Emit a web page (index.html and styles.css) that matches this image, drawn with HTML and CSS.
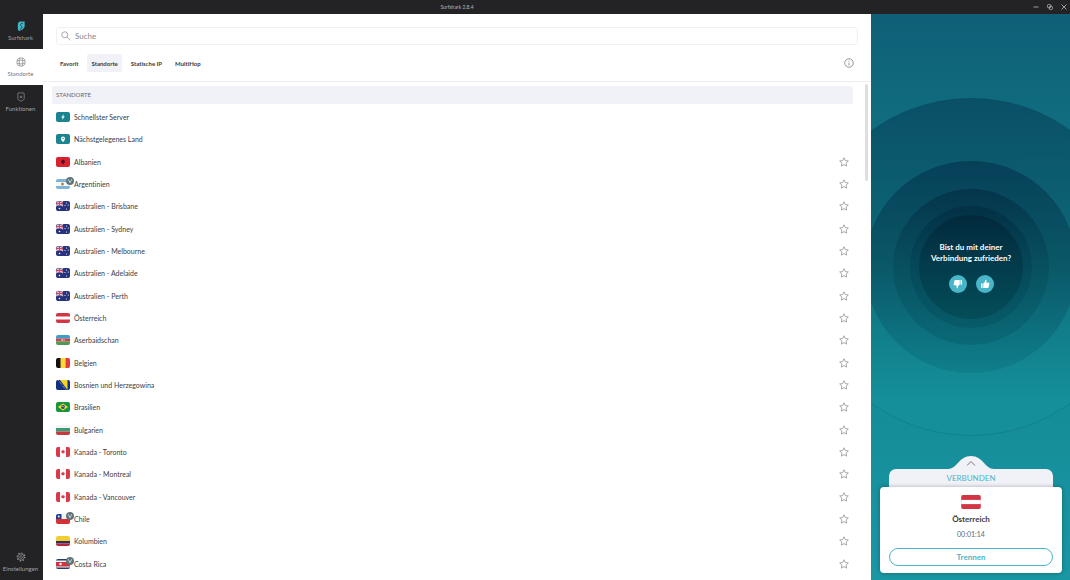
FILE: index.html
```html
<!DOCTYPE html>
<html lang="de">
<head>
<meta charset="utf-8">
<title>Surfshark 2.8.4</title>
<link rel="stylesheet" href="styles.css">
</head>
<body>
<!-- shared icons and flags -->
<svg class="defs" aria-hidden="true">
    <symbol id="star" viewBox="0 0 20 20"><path d="M10 1.5l2.6 5.6 6 .8-4.4 4.2 1.1 6.1L10 15.2l-5.3 3 1.1-6.1L1.4 7.9l6-.8z" fill="none" stroke="#8e8e93" stroke-width="1.5" stroke-linejoin="round"/></symbol>
    <symbol id="fast" viewBox="0 0 28 20"><rect width="28" height="20" fill="#1c8390"/><path d="M15.5 4l-5 7h3l-1 5 5-7h-3z" fill="#fff"/></symbol>
    <symbol id="near" viewBox="0 0 28 20"><rect width="28" height="20" fill="#1c8390"/><path d="M14 16.5c-3-3.5-4-5-4-7.5a4 4 0 0 1 8 0c0 2.5-1 4-4 7.5z" fill="#fff"/><circle cx="14" cy="9" r="1.3" fill="#1c8390"/></symbol>
    <symbol id="al" viewBox="0 0 28 20"><rect width="28" height="20" fill="#d8232f"/><path d="M14 6l1-1 1 2 2 0-1 2 1 2-2 1-1 2-1 1-1-1-1-2-2-1 1-2-1-2h2l1-2z" fill="#4c1018"/></symbol>
    <symbol id="ar" viewBox="0 0 28 20"><rect width="28" height="20" fill="#7fb4d6"/><rect y="6" width="28" height="8" fill="#f7f7f4"/><circle cx="13" cy="10" r="3" fill="#b58a4a"/></symbol>
    <symbol id="au" viewBox="0 0 28 20"><rect width="28" height="20" fill="#27337f"/><path d="M0 0l14 10M14 0L0 10" stroke="#e9b9c8" stroke-width="2.5"/><path d="M7 0v10M0 5h14" stroke="#f3d5de" stroke-width="3.5"/><path d="M7 0v10M0 5h14" stroke="#d2435c" stroke-width="2"/><g fill="#fff"><circle cx="7" cy="15" r="1.6"/><circle cx="21" cy="4" r="1.2"/><circle cx="18" cy="9" r="1.2"/><circle cx="24.5" cy="8" r="1.2"/><circle cx="21" cy="16" r="1.2"/></g></symbol>
    <symbol id="at" viewBox="0 0 28 20"><rect width="28" height="20" fill="#d43545"/><rect y="7" width="28" height="6" fill="#fff"/></symbol>
    <symbol id="az" viewBox="0 0 28 20"><rect width="28" height="7" fill="#3c9fc9"/><rect y="7" width="28" height="6" fill="#c8434a"/><rect y="13" width="28" height="7" fill="#4f9a52"/><circle cx="13" cy="10" r="2.2" fill="#fff"/><circle cx="14" cy="10" r="1.6" fill="#c8434a"/><circle cx="16.5" cy="10" r="1" fill="#fff"/></symbol>
    <symbol id="be" viewBox="0 0 28 20"><rect width="10" height="20" fill="#111"/><rect x="9" width="10" height="20" fill="#fbd53a"/><rect x="19" width="9" height="20" fill="#e23a3f"/></symbol>
    <symbol id="ba" viewBox="0 0 28 20"><rect width="28" height="20" fill="#13307f"/><path d="M8 0h15v20z" fill="#f5d427"/><path d="M5 1l15 19" stroke="#fff" stroke-width="1.5" stroke-dasharray="1.5 2"/></symbol>
    <symbol id="br" viewBox="0 0 28 20"><rect width="28" height="20" fill="#16963c"/><path d="M14 3l10 7-10 7-10-7z" fill="#f6dc2c"/><circle cx="14" cy="10" r="4" fill="#243f78"/><path d="M10.5 9q4-1 7 2" fill="none" stroke="#fff"/></symbol>
    <symbol id="bg" viewBox="0 0 28 20"><rect width="28" height="7" fill="#f4f4f4"/><rect y="6" width="28" height="7" fill="#3d9a76"/><rect y="13" width="28" height="7" fill="#c23a3c"/></symbol>
    <symbol id="ca" viewBox="0 0 28 20"><rect width="28" height="20" fill="#fff"/><rect width="8" height="20" fill="#d83a4a"/><rect x="20" width="8" height="20" fill="#d83a4a"/><path d="M14 5l1.5 2.5 1.5-.5-.5 2h2L16 12h-1.500v2h-1v-2H12L9.500 9h2l-.5-2 1.500.5z" fill="#d83a4a"/></symbol>
    <symbol id="cl" viewBox="0 0 28 20"><rect width="28" height="10" fill="#f4f4f4"/><rect y="10" width="28" height="10" fill="#d52f38"/><rect width="11" height="10" fill="#24408f"/><circle cx="5.5" cy="5" r="1.8" fill="#fff"/></symbol>
    <symbol id="co" viewBox="0 0 28 20"><rect width="28" height="10" fill="#f2cf30"/><rect y="10" width="28" height="5" fill="#2b2f66"/><rect y="15" width="28" height="5" fill="#b9283a"/></symbol>
    <symbol id="cr" viewBox="0 0 28 20"><rect width="28" height="20" fill="#2c3970"/><rect y="3" width="28" height="14" fill="#f4f4f4"/><rect y="6" width="28" height="9" fill="#d0343f"/><circle cx="9" cy="10" r="2.5" fill="#fff"/></symbol>
    <symbol id="virtual" viewBox="0 0 16 16"><circle cx="8" cy="8" r="8" fill="#5f7479"/><path d="M4.5 4.5L8 11.5l3.5-7" fill="none" stroke="#e8eeee" stroke-width="1.6"/></symbol>
    <symbol id="thumb" viewBox="0 0 20 20"><path d="M2 9h3v9H2zM6.5 9L10 5.5v-3C10 1 13 1 13 4v3.500h4.500c1 0 1.500.8 1.300 1.700l-1.600 7.300c-.2.9-.8 1.500-1.700 1.500h-9z" fill="#fff"/></symbol>
</svg>

<div class="app">
    <header class="titlebar">
        <span class="app-title">Surfshark 2.8.4</span>
        <div class="window-buttons">
            <button aria-label="Minimieren"><svg viewBox="0 0 12 12"><path d="M1 6h10"/></svg></button>
            <button aria-label="Wiederherstellen"><svg viewBox="0 0 12 12"><rect x="1" y="1" width="6.5" height="6.5" rx="2"/><rect x="4.5" y="4.5" width="6.5" height="6.5" rx="2"/></svg></button>
            <button aria-label="Schließen"><svg viewBox="0 0 12 12"><path d="M1 1l10 10M11 1L1 11"/></svg></button>
        </div>
    </header>

    <nav class="sidebar">
        <a href="#" class="nav-item">
            <svg viewBox="0 0 22 22"><path d="M10 1h9v10c0 4-3 7-6 8l-6 3c-2-1-3-3-3-5V8c0-4 2-7 6-7z" fill="#3fb9c8"/><path d="M15 5c-3 0-5 1-5 3.5 0 2.5 3.5 2.5 3.5 5.5 0 2-2 3-5 4" fill="none" stroke="#232326" stroke-width="1.6"/></svg>
            <span>Surfshark</span>
        </a>
        <a href="#" class="nav-item active">
            <svg viewBox="0 0 22 22" fill="none" stroke="#77777c" stroke-width="1.4"><circle cx="11" cy="11" r="9"/><rect x="7" y="7" width="8" height="8" rx="3"/><path d="M8 2.500v5M14 2.500v5M8 14.500v5M14 14.500v5M2.500 8h5M14.500 8h5M2.500 14h5M14.500 14h5"/></svg>
            <span>Standorte</span>
        </a>
        <a href="#" class="nav-item">
            <svg viewBox="0 0 22 22" fill="none" stroke="#a0a0a5" stroke-width="1.4"><path d="M6 2h10q2 0 2 2v10c0 3-3 5-7 6-4-1-7-3-7-6V4q0-2 2-2z"/><path d="M11 8v6M8 11h6"/></svg>
            <span>Funktionen</span>
        </a>
        <a href="#" class="nav-item settings">
            <svg viewBox="0 0 22 22" fill="none" stroke="#a0a0a5" stroke-width="1.4"><circle cx="11" cy="11" r="7"/><circle cx="11" cy="11" r="3"/><circle cx="11" cy="11" r="8.5" stroke-width="2.5" stroke-dasharray="2.5 4.175"/></svg>
            <span>Einstellungen</span>
        </a>
    </nav>

    <main class="content">
        <div class="top">
            <label class="search">
                <svg viewBox="0 0 20 20"><circle cx="7.5" cy="7.5" r="6"/><path d="M12 12l7 6.5"/></svg>
                <input type="text" placeholder="Suche" aria-label="Suche">
            </label>
            <div class="tabs">
                <button>Favorit</button>
                <button class="active">Standorte</button>
                <button>Statische IP</button>
                <button>MultiHop</button>
                <button class="info" aria-label="Info"><svg viewBox="0 0 20 20"><circle cx="10" cy="10" r="8.5"/><path d="M10 9v6M10 5v2"/></svg></button>
            </div>
        </div>

        <div class="locations">
            <h2>STANDORTE</h2>
            <ul>
                <li><span class="flag"><svg><use href="#fast"/></svg></span>Schnellster Server</li>
                <li><span class="flag"><svg><use href="#near"/></svg></span>Nächstgelegenes Land</li>
                <li><span class="flag"><svg><use href="#al"/></svg></span>Albanien<button class="fav" aria-label="Favorit"><svg><use href="#star"/></svg></button></li>
                <li><span class="flag"><svg><use href="#ar"/></svg><svg class="badge"><use href="#virtual"/></svg></span>Argentinien<button class="fav" aria-label="Favorit"><svg><use href="#star"/></svg></button></li>
                <li><span class="flag"><svg><use href="#au"/></svg></span>Australien - Brisbane<button class="fav" aria-label="Favorit"><svg><use href="#star"/></svg></button></li>
                <li><span class="flag"><svg><use href="#au"/></svg></span>Australien - Sydney<button class="fav" aria-label="Favorit"><svg><use href="#star"/></svg></button></li>
                <li><span class="flag"><svg><use href="#au"/></svg></span>Australien - Melbourne<button class="fav" aria-label="Favorit"><svg><use href="#star"/></svg></button></li>
                <li><span class="flag"><svg><use href="#au"/></svg></span>Australien - Adelaide<button class="fav" aria-label="Favorit"><svg><use href="#star"/></svg></button></li>
                <li><span class="flag"><svg><use href="#au"/></svg></span>Australien - Perth<button class="fav" aria-label="Favorit"><svg><use href="#star"/></svg></button></li>
                <li><span class="flag"><svg><use href="#at"/></svg></span>Österreich<button class="fav" aria-label="Favorit"><svg><use href="#star"/></svg></button></li>
                <li><span class="flag"><svg><use href="#az"/></svg></span>Aserbaidschan<button class="fav" aria-label="Favorit"><svg><use href="#star"/></svg></button></li>
                <li><span class="flag"><svg><use href="#be"/></svg></span>Belgien<button class="fav" aria-label="Favorit"><svg><use href="#star"/></svg></button></li>
                <li><span class="flag"><svg><use href="#ba"/></svg></span>Bosnien und Herzegowina<button class="fav" aria-label="Favorit"><svg><use href="#star"/></svg></button></li>
                <li><span class="flag"><svg><use href="#br"/></svg></span>Brasilien<button class="fav" aria-label="Favorit"><svg><use href="#star"/></svg></button></li>
                <li><span class="flag"><svg><use href="#bg"/></svg></span>Bulgarien<button class="fav" aria-label="Favorit"><svg><use href="#star"/></svg></button></li>
                <li><span class="flag"><svg><use href="#ca"/></svg></span>Kanada - Toronto<button class="fav" aria-label="Favorit"><svg><use href="#star"/></svg></button></li>
                <li><span class="flag"><svg><use href="#ca"/></svg></span>Kanada - Montreal<button class="fav" aria-label="Favorit"><svg><use href="#star"/></svg></button></li>
                <li><span class="flag"><svg><use href="#ca"/></svg></span>Kanada - Vancouver<button class="fav" aria-label="Favorit"><svg><use href="#star"/></svg></button></li>
                <li><span class="flag"><svg><use href="#cl"/></svg><svg class="badge"><use href="#virtual"/></svg></span>Chile<button class="fav" aria-label="Favorit"><svg><use href="#star"/></svg></button></li>
                <li><span class="flag"><svg><use href="#co"/></svg></span>Kolumbien<button class="fav" aria-label="Favorit"><svg><use href="#star"/></svg></button></li>
                <li><span class="flag"><svg><use href="#cr"/></svg><svg class="badge"><use href="#virtual"/></svg></span>Costa Rica<button class="fav" aria-label="Favorit"><svg><use href="#star"/></svg></button></li>
            </ul>
            <div class="scrollbar"></div>
        </div>
    </main>

    <aside class="panel">
        <div class="radar">
            <div class="ring ring1"></div>
            <div class="ring ring2"></div>
            <div class="ring ring3"></div>
            <div class="ring ring4"></div>
            <div class="ring ring5"></div>
            <div class="feedback">
                <p>Bist du mit deiner<br>Verbindung zufrieden?</p>
                <div class="thumbs">
                    <button aria-label="Nein"><svg class="down"><use href="#thumb"/></svg></button>
                    <button aria-label="Ja"><svg><use href="#thumb"/></svg></button>
                </div>
            </div>
        </div>

        <div class="connection">
            <svg class="bump" viewBox="0 0 46 13"><path d="M0 13c9 0 11-13 23-13s14 13 23 13z" fill="#f1f1f8"/><path d="M19 9.500l4-4 4 4" fill="none" stroke="#77777c"/></svg>
            <div class="status">VERBUNDEN</div>
            <div class="card">
                <svg class="big-flag"><use href="#at"/></svg>
                <h3>Österreich</h3>
                <p class="time">00:01:14</p>
                <button class="disconnect">Trennen</button>
            </div>
        </div>
    </aside>
</div>
</body>
</html>
```
FILE: styles.css
```css
*{
    box-sizing: border-box;
    margin: 0;
    padding: 0;
}
body{
    font-family: Lato, "Open Sans", sans-serif;
    font-size: 7px;
    font-variant-ligatures: none;
    color: #3c3c40;
    background: #fff;
}
button{
    border: 0;
    background: none;
    font-family: inherit;
    font-variant-ligatures: none;
    color: inherit;
    cursor: pointer;
}
svg{
    display: block;
}
.defs{
    position: absolute;
    width: 0;
    height: 0;
}
.app{
    display: grid;
    grid-template-columns: 43px 1fr 199px;
    grid-template-rows: 14px 1fr;
    height: 100vh;
    overflow: hidden;
}

/* title bar */
.titlebar{
    grid-column: 1 / -1;
    display: grid;
    grid-template-columns: subgrid;
    align-items: center;
    background: #232326;
    color: #b8b8bc;
}
.app-title{
    grid-column: 2;
    text-align: center;
    font-size: 5px;
}
.window-buttons{
    display: flex;
    justify-content: flex-end;
    gap: 8px;
    padding-right: 3px;
}
.window-buttons svg{
    width: 6px;
    height: 6px;
    fill: none;
    stroke: #c4c4c8;
    stroke-width: 1.5;
}

/* sidebar */
.sidebar{
    display: flex;
    flex-direction: column;
    background: #232326;
}
.nav-item{
    display: flex;
    flex-direction: column;
    align-items: center;
    justify-content: center;
    gap: 3px;
    height: 35px;
    padding-right: 2px;
    font-size: 6px;
    line-height: 8px;
    color: #a0a0a5;
    text-decoration: none;
}
.nav-item svg{
    width: 10px;
    height: 10px;
}
.nav-item.active{
    height: 36px;
    background: #fff;
    color: #77777c;
}
.nav-item.settings{
    margin-top: auto;
}

/* list of locations */
.content{
    display: flex;
    flex-direction: column;
    min-height: 0;
}
.top{
    padding: 13px 13px 9px;
    border-bottom: 1px solid #ececf0;
}
.search{
    display: flex;
    align-items: center;
    gap: 4px;
    height: 18px;
    padding: 0 4px;
    border: 1px solid #f1f1f4;
    border-radius: 3px;
}
.search svg{
    width: 10px;
    height: 10px;
    fill: none;
    stroke: #8e8e93;
    stroke-width: 1.5;
}
.search input{
    flex: 1;
    border: 0;
    outline: 0;
    font-family: inherit;
    font-size: 8px;
}
.search input::placeholder{
    color: #85858a;
}
.tabs{
    display: flex;
    gap: 5px;
    margin-top: 9px;
}
.tabs button{
    height: 18px;
    padding: 0 4px;
    border-radius: 2px;
    font-size: 6px;
    font-weight: 700;
}
.tabs button.active{
    background: #f1f1f8;
}
.tabs .info{
    margin-left: auto;
}
.info svg{
    width: 10px;
    height: 10px;
    fill: none;
    stroke: #77777c;
    stroke-width: 1.5;
}
.locations{
    position: relative;
    flex: 1;
    display: flex;
    flex-direction: column;
    padding: 4px 18px 5px 9px;
}
.locations h2{
    height: 18px;
    padding-left: 4px;
    font-size: 6px;
    line-height: 18px;
    font-weight: 400;
    color: #66666b;
    background: #f1f1f8;
    border-radius: 2px;
}
.locations ul{
    flex: 1;
    display: flex;
    flex-direction: column;
    margin-top: 2px;
    padding: 0 4px;
    list-style: none;
}
.locations li{
    flex: 1;
    display: flex;
    align-items: center;
    gap: 4px;
}
.flag{
    position: relative;
}
.flag svg{
    width: 14px;
    height: 10px;
    border-radius: 2px;
}
.flag .badge{
    position: absolute;
    top: -2px;
    right: -4px;
    width: 8px;
    height: 8px;
}
.fav{
    margin-left: auto;
}
.fav svg{
    width: 10px;
    height: 10px;
}
.scrollbar{
    position: absolute;
    top: 2px;
    right: 3px;
    width: 3px;
    height: 97px;
    background: #dedee2;
    border-radius: 2px;
}

/* connection panel */
.panel{
    display: flex;
    flex-direction: column;
    align-items: center;
    padding: 84px 8px 7px 9px;
    overflow: hidden;
    background: linear-gradient(#0f5f77, #106d7f 20%, #158c98 68%, #1997a3);
}
.radar{
    display: grid;
    place-items: center;
}
.ring, .feedback{
    grid-area: 1 / 1;
}
.ring{
    border-radius: 50%;
}
.ring1{
    width: 338px;
    height: 338px;
    background: linear-gradient(#0a4f66, #0c6272 35%, #0f7884 62%, #15909b 90%) border-box;
    border: 1px solid rgba(0, 80, 95, 0.2);
}
.ring2{
    width: 212px;
    height: 212px;
    background: linear-gradient(#064058, #0a5868 50%, #0f7f8b);
}
.ring3{
    width: 156px;
    height: 156px;
    background: linear-gradient(#04354b, #085060 50%, #0a6a77);
}
.ring4{
    width: 122px;
    height: 122px;
    background: linear-gradient(#033045, #05485a 50%, #075c69);
}
.ring5{
    width: 104px;
    height: 104px;
    background: linear-gradient(#02293c, #033c4c 50%, #044d59);
}
.feedback{
    color: #fff;
    font-size: 8px;
    line-height: 11px;
    font-weight: 700;
    text-align: center;
}
.thumbs{
    display: flex;
    justify-content: center;
    gap: 9px;
    margin-top: 11px;
}
.thumbs button{
    display: grid;
    place-items: center;
    width: 18px;
    height: 18px;
    border-radius: 50%;
    background: #49b5c8;
}
.thumbs svg{
    width: 10px;
    height: 10px;
}
.thumbs .down{
    transform: rotate(180deg);
}
.connection{
    align-self: stretch;
    margin-top: auto;
    text-align: center;
}
.bump{
    width: 46px;
    height: 13px;
    margin: 0 auto;
}
.status{
    height: 18px;
    margin: 0 9px;
    font-size: 8px;
    line-height: 18px;
    font-weight: 400;
    color: #49b5c8;
    background: #f1f1f8;
    border-radius: 7px 7px 0 0;
}
.card{
    padding: 8px 9px 7px;
    background: #fff;
    border-radius: 4px;
    box-shadow: 0 0 4px rgba(0, 0, 0, 0.3);
}
.big-flag{
    width: 20px;
    height: 14px;
    margin: 0 auto;
    border-radius: 2px;
}
.card h3{
    margin-top: 5px;
    font-size: 8px;
    line-height: 11px;
    font-weight: 700;
}
.time{
    margin-top: 4px;
    font-size: 7px;
    line-height: 11px;
    color: #66666b;
}
.disconnect{
    width: 100%;
    height: 18px;
    margin-top: 8px;
    border: 1px solid #49b5c8;
    border-radius: 9px;
    font-size: 8px;
    font-weight: 700;
    color: #49b5c8;
}
```
